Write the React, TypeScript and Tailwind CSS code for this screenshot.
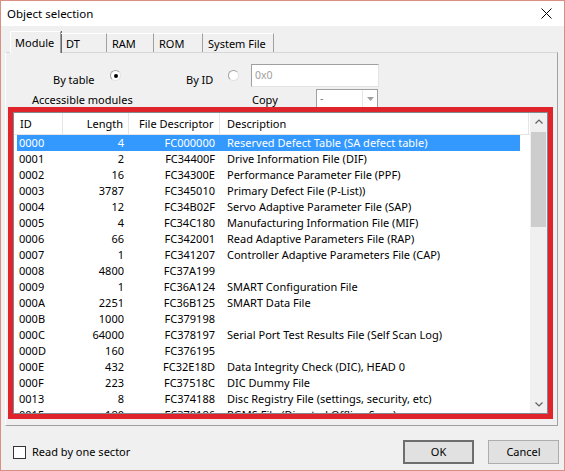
import React from "react";

interface Row {
  id: string;
  length: string;
  fd: string;
  desc: string;
}

const rows: Row[] = [
  { id: "0000", length: "4", fd: "FC000000", desc: "Reserved Defect Table (SA defect table)" },
  { id: "0001", length: "2", fd: "FC34400F", desc: "Drive Information File (DIF)" },
  { id: "0002", length: "16", fd: "FC34300E", desc: "Performance Parameter File (PPF)" },
  { id: "0003", length: "3787", fd: "FC345010", desc: "Primary Defect File (P-List))" },
  { id: "0004", length: "12", fd: "FC34B02F", desc: "Servo Adaptive Parameter File (SAP)" },
  { id: "0005", length: "4", fd: "FC34C180", desc: "Manufacturing Information File (MIF)" },
  { id: "0006", length: "66", fd: "FC342001", desc: "Read Adaptive Parameters File (RAP)" },
  { id: "0007", length: "1", fd: "FC341207", desc: "Controller Adaptive Parameters File (CAP)" },
  { id: "0008", length: "4800", fd: "FC37A199", desc: "" },
  { id: "0009", length: "1", fd: "FC36A124", desc: "SMART Configuration File" },
  { id: "000A", length: "2251", fd: "FC36B125", desc: "SMART Data File" },
  { id: "000B", length: "1000", fd: "FC379198", desc: "" },
  { id: "000C", length: "64000", fd: "FC378197", desc: "Serial Port Test Results File (Self Scan Log)" },
  { id: "000D", length: "160", fd: "FC376195", desc: "" },
  { id: "000E", length: "432", fd: "FC32E18D", desc: "Data Integrity Check (DIC), HEAD 0" },
  { id: "000F", length: "223", fd: "FC37518C", desc: "DIC Dummy File" },
  { id: "0013", length: "8", fd: "FC374188", desc: "Disc Registry File (settings, security, etc)" },
  { id: "0015", length: "180", fd: "FC378186", desc: "RGMS File (Directed Offline Scan)" },
];

const tabs = [
  { label: "DT", w: "w-[46px]" },
  { label: "RAM", w: "w-[47px]" },
  { label: "ROM", w: "w-[49px]" },
  { label: "System File", w: "w-[71px]" },
];

function Radio({ checked }: { checked?: boolean }) {
  return (
    <div className="w-[11px] h-[11px] rounded-full border border-t-[#a0a0a0] border-l-[#a0a0a0] border-r-[#e3e3e3] border-b-[#e3e3e3] bg-white flex items-center justify-center">
      {checked && <div className="w-[4px] h-[4px] rounded-full bg-black" />}
    </div>
  );
}

export default function App() {
  return (
    <div
      className="w-[565px] h-[471px] border border-[#d98f82] bg-[#f0f0f0] flex flex-col text-[11px] leading-[16px] text-black whitespace-nowrap overflow-hidden"
      style={{ fontFamily: '"Noto Sans", "Open Sans", sans-serif' }}
    >
      {/* title bar */}
      <div className="h-[25px] bg-white flex items-center justify-between pl-[6px] pr-[12px] shrink-0 text-[11.5px]">
        <span>Object selection</span>
        <svg width="11" height="11" viewBox="0 0 11 11" className="text-black">
          <path d="M0.5 0.5 L10.5 10.5 M10.5 0.5 L0.5 10.5" stroke="currentColor" strokeWidth="1" />
        </svg>
      </div>

      {/* tabs */}
      <div className="mt-[4px] h-[22px] flex items-end pl-[9px] relative z-10 shrink-0">
        <div className="w-[51px] h-[22px] -mb-px bg-[#f0f0f0] border-t border-l border-white border-r border-r-[#a0a0a0] shadow-[1px_0_0_#696969] pl-[4px] pt-[3px]">
          Module
        </div>
        {tabs.map((t) => (
          <div
            key={t.label}
            className={`${t.w} h-[19px] border-t border-white border-r border-r-[#a0a0a0] pl-[5px] pt-[2px]`}
          >
            {t.label}
          </div>
        ))}
      </div>

      {/* panel */}
      <div className="ml-[4px] mr-[6px] h-[374px] border border-t-[#d8d8d8] border-l-white border-r-[#a0a0a0] border-b-[#a0a0a0] flex flex-col shrink-0">
        {/* by table / by id */}
        <div className="mt-[11px] h-[23px] flex items-start pl-[47px]">
          <span className="w-[57px] mt-[8px]">By table</span>
          <div className="mt-[6px]">
            <Radio checked />
          </div>
          <span className="ml-[65px] w-[42px] mt-[8px]">By ID</span>
          <div className="mt-[6px]">
            <Radio />
          </div>
          <div className="ml-[12px] w-[128px] h-[23px] bg-white border border-t-[#a0a0a0] border-l-[#a0a0a0] border-r-[#e3e3e3] border-b-[#e3e3e3] pl-[3px] pt-[2px] text-[10.5px] text-[#a0a0a0]">
            0x0
          </div>
        </div>

        {/* accessible modules / copy */}
        <div className="mt-[2px] h-[19px] flex items-start pl-[26px]">
          <span className="w-[220px] mt-[3px]">Accessible modules</span>
          <span className="w-[64px] mt-[3px]">Copy</span>
          <div className="w-[62px] h-[19px] bg-white border border-[#a0a0a0] flex">
            <span className="flex-1 pl-[3px] text-[#808080] leading-[16px]">-</span>
            <div className="w-[15px] border-l border-[#e6e6e6] flex items-center justify-center">
              <svg width="7" height="4" viewBox="0 0 7 4">
                <path d="M0 0 H7 L3.5 4 Z" fill="#a0a0a0" />
              </svg>
            </div>
          </div>
        </div>

        {/* list in red frame */}
        <div className="-mt-px ml-[2px] w-[545px] h-[312px] border-[5px] border-[#e0242b]">
          <div className="w-full h-full border border-[#828790] bg-white flex overflow-hidden">
            <div className="flex-1 flex flex-col overflow-hidden">
              <div className="h-[22px] flex shrink-0 border-b border-[#e5e5e5]">
                <div className="w-[49px] border-r border-[#e5e5e5] pl-[6px] pt-[3px]">ID</div>
                <div className="w-[66px] border-r border-[#e5e5e5] pr-[5px] pt-[3px] text-right">Length</div>
                <div className="w-[91px] border-r border-[#e5e5e5] pl-[10px] pt-[3px]">File Descriptor</div>
                <div className="w-[309px] border-r border-[#e5e5e5] pl-[7px] pt-[3px]">Description</div>
              </div>
              {rows.map((r, i) => (
                <div
                  key={r.id}
                  className={`ml-[3px] w-[503px] h-[16px] shrink-0 flex ${
                    i === 0 ? "bg-[#3399ff] text-white" : ""
                  }`}
                >
                  <div className="w-[46px] pl-[2px]">{r.id}</div>
                  <div className="w-[66px] pr-[5px] text-right">{r.length}</div>
                  <div className="w-[91px] pr-[5px] text-right">{r.fd}</div>
                  <div className="flex-1 pl-[7px]">{r.desc}</div>
                </div>
              ))}
            </div>
            {/* scrollbar */}
            <div className="w-[17px] bg-[#f0f0f0] flex flex-col items-center shrink-0">
              <div className="h-[17px] flex items-center justify-center">
                <svg width="8" height="5" viewBox="0 0 8 5">
                  <path d="M0.5 4.5 L4 1 L7.5 4.5" fill="none" stroke="#606060" strokeWidth="1.2" />
                </svg>
              </div>
              <div className="mt-[2px] w-[15px] h-[95px] bg-[#cdcdcd]" />
              <div className="flex-1" />
              <div className="h-[17px] flex items-center justify-center">
                <svg width="8" height="5" viewBox="0 0 8 5">
                  <path d="M0.5 0.5 L4 4 L7.5 0.5" fill="none" stroke="#606060" strokeWidth="1.2" />
                </svg>
              </div>
            </div>
          </div>
        </div>
      </div>

      {/* bottom */}
      <div className="flex items-start pt-[14px] pl-[12px]">
        <div className="mt-[6px] w-[13px] h-[13px] bg-white border border-[#333333]" />
        <span className="ml-[6px] mt-[4px]">Read by one sector</span>
        <div className="flex-1" />
        <button className="w-[71px] h-[24px] bg-[#e1e1e1] border-2 border-[#6e6e6e] outline-none">OK</button>
        <button className="ml-[14px] mr-[5px] w-[71px] h-[24px] bg-[#e1e1e1] border border-[#adadad]">Cancel</button>
      </div>
    </div>
  );
}
